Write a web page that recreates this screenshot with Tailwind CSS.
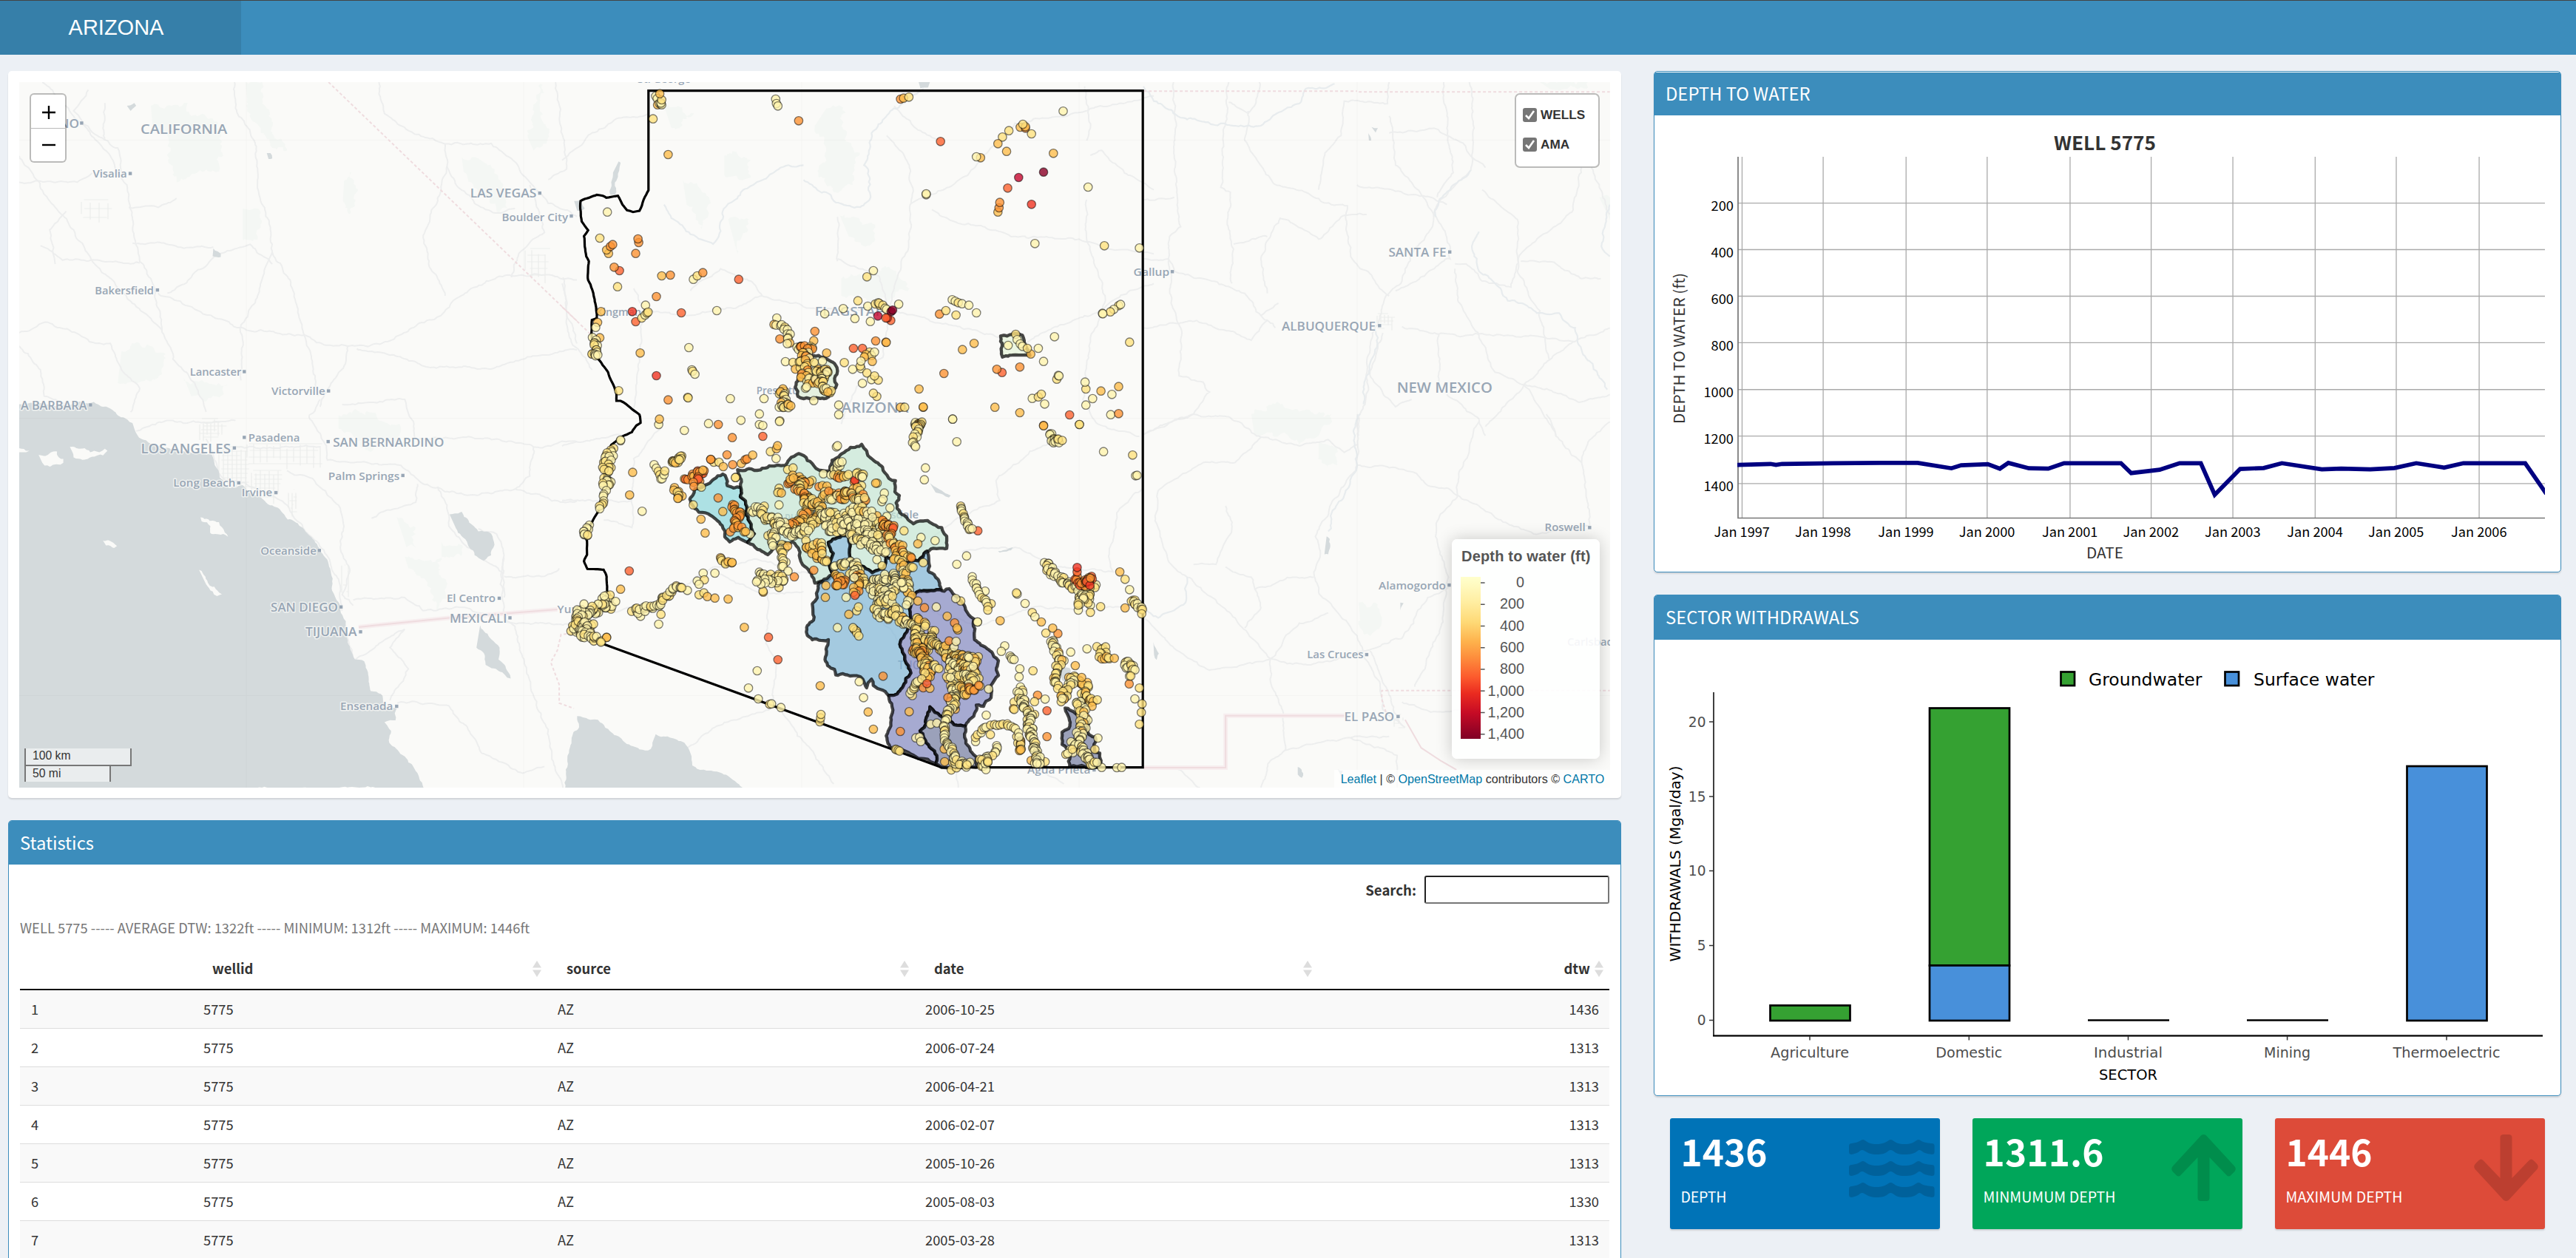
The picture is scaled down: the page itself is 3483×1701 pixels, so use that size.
<!DOCTYPE html>
<html lang="en">
<head>
<meta charset="utf-8">
<title>ARIZONA</title>
<script src="https://cdn.jsdelivr.net/npm/@tailwindcss/browser@4"></script>
</head>
<body class="bg-[#ecf0f5] text-[#333] w-[3483px] h-[1701px] overflow-hidden font-['Noto_Sans_CJK_JP','Open_Sans',sans-serif]">
<header class="flex h-[74px] border-t border-[#444] bg-[#3c8dbc]">
  <div class="w-[326px] bg-[#367fa9] text-white flex items-center justify-center font-['Liberation_Sans',sans-serif] text-[29px] pr-[12px]">ARIZONA</div>
</header>
<main class="flex gap-[44px] pt-[22px] pl-[11px]">
  <div class="w-[2181px] flex flex-col gap-[30px]">
    <section class="h-[983px] rounded-[5px] bg-white pt-[15px] pl-[15px] pr-[15px] shadow-[0_2px_2px_rgba(0,0,0,0.12)]">
      <div class="relative w-[2151px] h-[954px] overflow-hidden font-['Liberation_Sans',sans-serif]">
        <svg id="map" class="block w-[2151px] h-[954px]" viewBox="26 111 2151 954"></svg>
        <div class="absolute left-[14px] top-[15px] w-[50px] h-[94px] rounded-[6px] border-2 border-black/25 bg-white bg-clip-padding flex flex-col text-black">
          <div class="h-[46px] border-b border-[#bbb] flex items-center justify-center pt-[3px] pl-px"><svg width="18" height="18" viewBox="0 0 18 18"><path d="M9 0v18M0 9h18" stroke="black" stroke-width="2.4"/></svg></div>
          <div class="flex-1 flex items-center justify-center pl-px"><svg width="18" height="18" viewBox="0 0 18 18"><path d="M0 9h18" stroke="black" stroke-width="2.4"/></svg></div>
        </div>
        <div class="absolute left-[2022px] top-[15px] w-[115px] h-[101px] rounded-[7px] border-2 border-black/25 bg-white bg-clip-padding pl-[9px] pt-[17px] flex flex-col gap-[20px] text-[17.2px] font-bold leading-[20px]">
          <label class="flex items-center gap-[5px]"><svg width="19" height="19" viewBox="0 0 19 19"><rect width="19" height="19" rx="3" fill="#767676"/><path d="M4 10l4 4L15 4" fill="none" stroke="white" stroke-width="2.6"/></svg>WELLS</label>
          <label class="flex items-center gap-[5px]"><svg width="19" height="19" viewBox="0 0 19 19"><rect width="19" height="19" rx="3" fill="#767676"/><path d="M4 10l4 4L15 4" fill="none" stroke="white" stroke-width="2.6"/></svg>AMA</label>
        </div>
        <div class="absolute left-[1937px] top-[618px] w-[200px] h-[297px] rounded-[7px] bg-white/90 shadow-[0_0_22px_rgba(0,0,0,0.2)]">
          <svg width="200" height="297" viewBox="1963 729 200 297" fill="#555" font-size="19.8" text-anchor="end">
            <defs><linearGradient id="depth" x1="0" y1="0" x2="0" y2="1"><stop offset="0" stop-color="#ffffcc"/><stop offset=".05" stop-color="#fffac0"/><stop offset=".16" stop-color="#ffeda0"/><stop offset=".28" stop-color="#fed976"/><stop offset=".4" stop-color="#feb24c"/><stop offset=".5" stop-color="#fd8d3c"/><stop offset=".62" stop-color="#fc5a2d"/><stop offset=".72" stop-color="#ea2b20"/><stop offset=".84" stop-color="#c60b25"/><stop offset="1" stop-color="#800026"/></linearGradient></defs>
            <text x="1976" y="758.500" font-weight="bold" font-size="20" text-anchor="start" textLength="174.500">Depth to water (ft)</text>
            <rect x="1975" y="780" width="27" height="219" fill="url(#depth)"/>
            <path d="M2002 788h5.600M2002 817.200h5.600M2002 846.500h5.600M2002 875.800h5.600M2002 905h5.600M2002 934.300h5.600M2002 963.600h5.600M2002 992.800h5.600" stroke="#555" stroke-width="1.500"/>
            <text x="2061" y="794">0</text><text x="2061" y="823">200</text><text x="2061" y="852.500">400</text><text x="2061" y="882">600</text><text x="2061" y="911">800</text><text x="2061" y="940.500">1,000</text><text x="2061" y="969.500">1,200</text><text x="2061" y="999">1,400</text>
          </svg>
        </div>
        <div class="absolute right-0 bottom-0 h-[24px] w-[373px] bg-white/70 flex items-center justify-center gap-[4.5px] text-[16.1px] text-[#333] whitespace-pre pl-px"><span class="text-[#0078a8]">Leaflet</span><span>| ©</span><span class="text-[#0078a8]">OpenStreetMap</span><span>contributors ©</span><span class="text-[#0078a8]">CARTO</span></div>
        <div class="absolute left-[7px] bottom-[8px] flex flex-col items-start text-[15.7px] leading-[20px] text-[#333]">
          <div class="w-[145px] h-[24px] border-2 border-t-0 border-[#777] bg-white/50 pl-[9px]">100 km</div>
          <div class="w-[117px] h-[23px] -mt-[2px] border-2 border-b-0 border-[#777] bg-white/50 pl-[9px]">50 mi</div>
        </div>
      </div>
    </section>
    <section class="h-[640px] rounded-[5px] border border-[#3c8dbc] bg-white overflow-hidden">
      <h3 class="h-[59px] bg-[#3c8dbc] text-white text-[23.8px] flex items-center pl-[15px] pb-px"><span>Statistics</span></h3>
      <div class="px-[15px]">
        <div class="flex justify-end items-center gap-[11px] pt-[15px] text-[18.6px] font-bold"><span>Search:</span><div class="w-[250px] h-[38px] rounded-[3px] border-2 border-[#767676] border-t-[#222] border-l-[#222]"></div></div>
        <p class="h-[30px] mt-[18px] text-[18.36px] text-[#777] flex items-center"><span class="whitespace-nowrap">WELL 5775 ----- AVERAGE DTW: 1322ft ----- MINIMUM: 1312ft ----- MAXIMUM: 1446ft</span></p>
        <div class="grid grid-cols-[248px_479px_497px_545px_380px] h-[69px] border-b-2 border-[#111] font-bold text-[18.4px] items-center pt-[13px]" id="thead"></div>
        <div id="rows" class="text-[18.3px]"></div>
      </div>
    </section>
  </div>
  <div class="w-[1227px] flex flex-col">
    <section class="h-[678px] rounded-[5px] border border-[#3c8dbc] bg-white overflow-hidden shadow-[0_2px_2px_rgba(0,0,0,0.12)] pt-px">
      <h3 class="h-[58px] bg-[#3c8dbc] text-white text-[23.8px] flex items-center pl-[15px] pb-[3px]"><span>DEPTH TO WATER</span></h3>
      <svg id="line" class="block" width="1225" height="617" viewBox="2237 157 1225 617"></svg>
    </section>
    <section class="mt-[30px] h-[678px] rounded-[5px] border border-[#3c8dbc] bg-white overflow-hidden shadow-[0_2px_2px_rgba(0,0,0,0.12)]">
      <h3 class="h-[60px] bg-[#3c8dbc] text-white text-[23.8px] flex items-center pl-[15px] pb-[2px]"><span>SECTOR WITHDRAWALS</span></h3>
      <svg id="bars" class="block" width="1225" height="616" viewBox="2237 865 1225 616"></svg>
    </section>
    <div class="mt-[30px] pl-[22px] flex gap-[44px] text-white">
      <div class="w-[365px] h-[150px] rounded-[3px] bg-[#0073b7] shadow-[0_2px_2px_rgba(0,0,0,0.12)]"><svg width="365" height="150" viewBox="0 0 365 150" fill="white">
        <g fill="#000" fill-opacity=".15" id="waves"></g>
        <text x="14.500" y="64.500" font-size="49.500" font-weight="bold" textLength="117">1436</text><text x="14.500" y="113.500" font-size="19.500" textLength="62">DEPTH</text></svg></div>
      <div class="w-[365px] h-[150px] rounded-[3px] bg-[#00a65a] shadow-[0_2px_2px_rgba(0,0,0,0.12)]"><svg width="365" height="150" viewBox="0 0 365 150" fill="white">
        <path d="M312.500 22c2 0 3.500 1 5 3l36 39c3 3 3 6 0 9l-4 4c-2 2-4 2-6 0l-23-24v55c0 3-2 4-4 4h-8c-2 0-4-1-4-4V53l-23 24c-2 2-4 2-6 0l-4-4c-3-3-3-6 0-9l36-39c1.500-2 3-3 5-3z" fill="#000" fill-opacity=".15"/>
        <text x="14.500" y="64.500" font-size="49.500" font-weight="bold" textLength="163">1311.6</text><text x="14.500" y="113.500" font-size="19.500" textLength="179">MINMUMUM DEPTH</text></svg></div>
      <div class="w-[365px] h-[150px] rounded-[3px] bg-[#dd4b39] shadow-[0_2px_2px_rgba(0,0,0,0.12)]"><svg width="365" height="150" viewBox="0 0 365 150" fill="white">
        <path transform="translate(0 134) scale(1 -1)" d="M312.500 22c2 0 3.500 1 5 3l36 39c3 3 3 6 0 9l-4 4c-2 2-4 2-6 0l-23-24v55c0 3-2 4-4 4h-8c-2 0-4-1-4-4V53l-23 24c-2 2-4 2-6 0l-4-4c-3-3-3-6 0-9l36-39c1.500-2 3-3 5-3z" fill="#000" fill-opacity=".15"/>
        <text x="14.500" y="64.500" font-size="49.500" font-weight="bold" textLength="117">1446</text><text x="14.500" y="113.500" font-size="19.500" textLength="158">MAXIMUM DEPTH</text></svg></div>
    </div>
  </div>
</main>
<script>
// ---------- table ----------
const sortIcon = '<svg width="12" height="22" viewBox="0 0 12 22" fill="#ddd"><path d="M6 0l6 9.500H0zM6 22l6-9.500H0z"/></svg>';
document.getElementById('thead').innerHTML = '<span></span>' +
  ['wellid','source','date'].map(h => `<div class="flex items-center justify-between pl-[12px] pr-[22px]"><span>${h}</span>${sortIcon}</div>`).join('') +
  `<div class="flex items-center justify-end gap-[6px] pr-[8px]"><span>dtw</span>${sortIcon}</div>`;
const data = [['2006-10-25',1436],['2006-07-24',1313],['2006-04-21',1313],['2006-02-07',1313],['2005-10-26',1313],['2005-08-03',1330],['2005-03-28',1313]];
document.getElementById('rows').innerHTML = data.map((r,i) =>
  `<div class="grid grid-cols-[248px_479px_497px_545px_380px] h-[52px] items-center border-b border-[#ddd] ${i%2?'bg-white':'bg-[#f9f9f9]'}"><span class="pl-[15px]">${i+1}</span><span>5775</span><span>AZ</span><span>${r[0]}</span><span class="text-right pr-[14px]">${r[1]}</span></div>`).join('');

// ---------- drawing helpers ----------
const F = {L:[0,0,.49745,.35714],M:[0,540,.49745,.35714],A:[760,90,.5102,.33333],B:[760,560,.5102,.33333],C:[920,590,.33333,.33333],R:[1540,90,.43367,.33333],S:[1540,560,.43367,.34439]};
const P = (f,s) => s.trim().split(/\s+/).map(p => {const [x,y]=p.split(',').map(Number);const t=F[f];return [t[0]+x*t[2],t[1]+y*t[3]]});
const D = pts => pts.map((p,i)=>(i?'L':'M')+p[0].toFixed(1)+' '+p[1].toFixed(1)).join('');
const hash = (x,y) => {const v=Math.sin(Math.round(x*7)*12.9898+Math.round(y*7)*78.233)*43758.5453;return v-Math.floor(v)};
function seg(a,b,k){const l=Math.hypot(a[0]-b[0],a[1]-b[1]);if(l<5)return[b];const mx=(a[0]+b[0])/2,my=(a[1]+b[1])/2,d=Math.min(l*.22,3)*k;
  const m=[mx+(hash(mx,my)-.5)*d,my+(hash(my,mx)-.5)*d];return[...seg(a,m,k),...seg(m,b,k)]}
const rough=(pts,k=1)=>{let o=[pts[0]];for(let i=1;i<pts.length;i++)o.push(...seg(pts[i-1],pts[i],k));return o};
const label=(x1,x2,y,size,t,extra='')=>`<text x="${x1}" y="${y}" font-size="${size}" textLength="${x2-x1}" lengthAdjust="spacingAndGlyphs" ${extra}>${t}</text>`;

// ---------- map ----------
let m = '<rect x="26" y="111" width="2151" height="954" fill="#fafaf8"/>';
const parks = [['L','410,400 510,390 520,440 590,460 595,650 520,660 480,690 460,600 440,510 415,480'],['L','668,311 712,311 720,400 740,500 780,570 740,560 700,470 672,380'],['L','660,790 700,790 708,850 700,908 660,908'],['L','330,1330 380,1300 450,1340 430,1430 320,1450'],['L','1255,595 1300,600 1350,660 1380,790 1350,800 1300,730 1260,650'],['L','935,690 955,650 968,730 950,825 932,760'],['L','1435,520 1475,320 1490,520 1450,570'],['L','500,1430 620,1450 600,1500 560,1520 520,1500'],['M','920,60 1020,50 1090,110 1070,170 980,180 920,110'],['M','1100,595 1200,600 1212,740 1190,800 1160,690 1110,640'],['M','1078,445 1125,480 1130,560 1105,560'],['M','1200,540 1250,550 1255,590 1200,595'],['A','700,170 745,165 750,290 790,350 770,480 720,510 680,450 700,330 670,240'],['A','735,600 830,650 820,720 760,690'],['A','430,360 500,380 500,450 430,440'],['A','740,860 870,820 920,900 860,950 740,930'],['A','320,460 390,530 370,660 330,560'],['A','440,620 495,620 465,760'],['A','270,160 350,190 290,250'],['R','350,1410 430,1360 500,1400 600,1410 560,1498 360,1495'],['S','450,0 580,0 560,60 500,120'],['S','560,110 620,130 620,200 590,215 560,170'],['S','685,740 735,740 755,830 720,870 690,810'],['R','1250,63 1400,63 1400,85 1280,90'],['R','1435,530 1468,530 1468,620']];
parks.forEach(p=>m+=`<path d="${D(rough(P(...p),3))}Z" fill="#f4f7f4"/>`);
const roads = [
 ['L','115,311 150,360 215,460 300,590 345,700 360,830 380,990 420,1090 440,1240 470,1360 520,1440 560,1560'],['L','52,590 90,660 140,770 200,870 265,1010 320,1090 440,1250'],['L','637,311 640,410 690,530 700,690 735,860 740,955 700,1120 655,1230 655,1440'],['L','740,955 790,1080 830,1280 865,1500'],['L','430,1110 490,1140 580,1200 670,1250 820,1270 880,1305 945,1310 1000,1312 1060,1290 1130,1235 1180,1210 1240,1130 1350,1050 1480,1040 1568,1060'],['L','945,1310 940,1370 900,1450 870,1540'],['L','970,1320 1130,1370 1170,1392 1340,1395 1420,1360 1568,1325'],['L','1030,311 1045,430 1120,500 1210,545 1335,543 1390,600 1440,690 1490,770 1568,820'],['L','1210,545 1215,630 1240,700 1290,770 1340,805 1400,790'],['L','1440,700 1480,880 1410,960 1390,1050'],['L','1510,311 1525,480 1540,640 1490,680'],['L','285,390 285,530'],['L','52,690 210,690 250,655'],['L','360,920 440,920 500,940 580,935'],['L','350,785 430,785 480,750'],['L','110,930 170,985 280,990 380,995'],['L','455,1110 520,1050 580,975 680,925 740,1000'],['L','52,1260 130,1220 260,1300 300,1300 330,1400 380,1470 355,1560'],['L','52,1310 110,1400 120,1500 200,1540'],['L','240,340 200,420 250,500 320,560 330,680'],['L','1215,630 1190,760 1150,900 1165,1000 1210,1120'],['L','180,800 135,870 150,1000'],['L','1530,1050 1540,1180 1568,1300'],
 ['M','840,60 880,160 890,230 1010,245 1090,250 1150,320 1210,350 1290,362 1400,340 1500,385 1568,385'],['M','640,180 760,185 870,180'],['M','370,120 470,80 560,90 640,80'],['M','560,150 600,290 700,340 780,400 800,450 880,570 920,680 930,800'],['M','780,270 850,300 920,400 935,480 925,560 950,640 930,740 960,780'],['M','960,760 1100,750 1150,800 1270,790 1370,840 1568,855'],['M','1370,600 1360,700 1370,830 1400,860 1425,1000 1460,1170 1490,1250 1500,1350 1530,1470'],['M','940,860 960,990 1100,870 1060,940 1110,1020 1060,1140'],['M','1080,1150 1220,1160 1270,1240 1310,1340 1420,1415 1480,1390'],['M','1190,330 1215,400 1220,480 1270,560 1370,660'],['M','840,60 870,0'],['M','1300,490 1350,510 1370,590 1370,750'],['M','930,20 1100,0 1130,150 1350,150 1450,180 1568,160'],['M','1450,180 1440,290 1400,340'],['M','1520,640 1480,670 1370,670'],['M','1010,450 1050,420 1130,390 1135,320'],
 ['A','0,380 60,300 140,215 230,190'],['A','210,995 330,1010 460,980 530,930 640,975 770,985 880,990 1000,1040 1130,1085 1220,1130 1300,1060 1400,1010 1470,940 1568,880'],['A','190,900 220,990 205,1200 190,1410'],['A','730,790 730,610'],['A','730,780 840,850 870,1000 850,1180 780,1300 740,1450'],['A','980,580 1060,640 1120,650 1190,690 1370,700 1450,740 1568,760'],['A','925,555 1010,500 1080,430 1150,310 1200,230 1400,170 1568,120'],['A','925,555 920,700 880,900 870,1000'],['A','860,280 920,400 925,555'],['A','880,160 950,260 1000,300'],['A','1390,300 1400,250 1385,80'],['A','1390,540 1390,700 1440,950 1400,1100 1380,1350 1420,1450 1530,1500'],['A','1400,360 1430,340 1500,440 1568,500'],['A','340,910 420,820 500,870 530,930'],['A','0,880 20,1100 80,1230'],
 ['B','0,130 60,110 190,70'],['B','110,430 185,460 190,180 260,60'],['B','0,350 185,352'],['B','125,800 250,770 400,620 520,590 640,640 760,730 870,870 930,1020'],['B','400,640 540,730 640,720'],['B','550,700 540,930 570,1000 560,1160 660,1360 720,1500'],['B','290,1400 430,1250 550,1200'],['B','930,570 1040,430 1160,350 1150,270 1240,150 1330,100'],['B','980,800 1100,860 1260,780 1400,800 1540,760'],['B','1060,560 1200,540 1290,610 1460,640 1450,560 1470,400 1540,300'],['B','1040,1430 1050,1515'],['B','1250,1430 1330,1500'],
 ['R','108,63 110,370 130,650 95,690 100,960 130,1060 125,1255 200,1280 220,1320 170,1410 14,1490'],['R','280,63 260,390 255,490 285,510 275,640 295,740 290,880'],['R','14,780 90,780 110,830 200,860 330,920 380,1010 425,1060'],['R','340,180 330,300 420,475 520,510 600,560 650,565 645,620 660,770 690,820 720,840 750,900 780,930'],['R','280,145 340,190 360,160 375,63'],['R','780,63 775,150 640,140 630,280 580,350 560,500'],['R','780,270 840,260 920,250 1010,310 1040,370 1080,410'],['R','680,480 790,500 910,530 960,560'],['R','780,200 800,400 850,470 920,600 945,650 970,730 970,780 890,850 800,910'],['R','950,63 960,250 980,430 930,530'],['R','1030,63 1045,250 1035,420 980,490 930,560 910,660 850,760 820,870 770,930 735,1060 710,1200 705,1370 680,1440 685,1498'],['R','985,800 1020,800 1070,870 1160,895 1190,760 1260,680 1350,590 1380,410'],['R','985,820 1000,960 1060,1100 1110,1240 1200,1290 1300,1498'],['R','1190,790 1300,800 1380,860 1440,860'],['R','820,1055 935,1085 1150,1090 1360,1115 1468,1060'],['R','1360,1115 1280,1190 1200,1290 1080,1460'],['R','1200,1290 1380,1360 1468,1330'],['R','1070,500 1130,570 1180,620 1180,830 1250,990 1280,1190'],['R','410,690 440,615 560,700 630,610 710,600'],['R','14,540 110,530'],['R','14,1060 180,1030 350,1110 400,1030'],['R','760,1080 720,1250 800,1380 850,1350'],['R','935,1085 935,1280'],['R','1410,410 1440,500 1468,600'],['R','960,1330 1060,1430 1080,1498'],['R','380,1010 435,960'],['R','400,920 380,780 410,690'],['R','295,720 400,690'],
 ['S','14,80 170,0 280,10 380,90 500,125 590,100 640,150 680,120'],['S','380,90 300,190 200,190 130,240 60,300 50,400 90,570 150,640 240,730 300,800 410,960 410,1050 450,1180 455,1320 410,1360 380,1466'],['S','680,200 800,210 860,230 900,280 960,290 1040,350 1150,430 1230,470 1405,440'],['S','1270,0 1310,100 1380,190 1400,350 1405,440'],['S','990,330 930,420 930,500 965,640 940,840 860,1070'],['S','965,680 900,720 820,880 700,930 600,970 500,980 410,960 220,1005 110,920 14,800'],['S','680,0 680,200 600,350 550,480 565,560 545,620 560,700 620,780 680,870 700,950 750,1050 760,1160 830,1230'],['S','720,930 770,1070 820,1220'],['S','820,1130 910,1170 1000,1160'],['S','455,1320 660,1270 780,1265'],['S','660,1270 805,1340 805,1466'],['S','1060,30 1000,220 990,330'],['S','1468,30 1400,110 1380,190'],['S','110,1388 190,1466'],['S','590,780 500,820 410,960'],['S','270,600 350,640 380,760 330,840'],['S','360,690 480,640 545,640'],['S','170,590 240,590 290,440 270,360']];
roads.forEach(r=>m+=`<path d="${D(rough(P(...r),1.2))}" fill="none" stroke="#edeeee" stroke-width="2"/>`);
// city street grids
const grid=(x,y,w,h,s)=>{let d='';for(let i=0;i<=w;i+=s)d+=`M${x+i} ${y+hash(i,y)*8}v${h-hash(x,i)*14}`;for(let j=0;j<=h;j+=s)d+=`M${x+hash(j,x)*8} ${y+j}h${w-hash(y,j)*14}`;m+=`<path d="${d}" fill="none" stroke="#ecedec" stroke-width="1.200"/>`};
grid(270,566,34,28,5);grid(296,604,38,60,6);grid(334,600,100,30,9);grid(340,636,40,40,6);grid(710,336,30,40,9);grid(1862,424,22,20,5);grid(110,270,40,28,12);grid(180,912,34,14,8);grid(1885,966,14,18,6);grid(390,662,10,34,5);grid(462,764,12,50,9);
const rivers=[['A','640,460 700,510 720,545 790,570 815,540 815,450 800,400 820,270 870,180 940,110 970,63'],['A','640,400 600,400 540,455 480,500 450,550 425,590 415,690 400,720 340,680 270,560'],['R','14,80 60,150 150,215 300,240 380,240 430,190 500,150 520,90 610,70'],['R','1035,420 970,500 930,570 925,610'],['R','1060,670 1040,720 1060,830 1110,880 1150,950 1210,970 1240,1000 1310,1000 1360,1060 1380,1150 1430,1250 1460,1310'],['S','690,0 670,60 680,200 640,320 600,390 590,460'],['S','150,640 145,740 60,800 14,760'],['R','735,1060 745,1100 700,1300 700,1370'],['R','1468,560 1445,740 1468,770']];
rivers.forEach(r=>m+=`<path d="${D(rough(P(...r),1.500))}" fill="none" stroke="#e8ecee" stroke-width="2.200"/>`);
const water=[['M','52,18 130,20 255,10 300,35 335,68 360,90 378,145 410,168 460,185 540,200 575,208 597,295 620,335 660,325 720,385 765,425 782,455 800,462 830,500 862,548 885,600 900,660 902,710 925,790 940,840 945,920 965,985 990,992 1002,1050 1008,1105 1035,1115 1045,1160 1078,1170 1075,1215 1045,1222 1063,1255 1058,1300 1085,1335 1110,1375 1135,1415 1155,1475 52,1475'],['B','8,1520 14,1400 30,1290 45,1270 40,1225 75,1240 95,1240 130,1290 165,1330 205,1360 235,1358 248,1298 320,1330 340,1375 345,1425 410,1450 440,1468 482,1520'],['M','1222,435 1255,426 1300,500 1335,508 1344,550 1335,590 1315,610 1290,590 1265,530 1240,490'],['M','1305,855 1330,900 1358,940 1355,985 1388,1057 1320,1005 1315,960 1295,940'],['A','150,385 155,390 140,470 140,520 128,520 135,430'],['A','32,545 50,540 60,575 40,585'],['A','945,63 975,63 970,85 950,90'],['L','725,580 735,580 740,600 730,602'],['L','580,940 600,960 600,973 578,970'],['L','345,400 365,390 370,400 355,420'],['S','585,480 595,490 590,550 578,550'],['S','45,895 62,940 55,965 47,945'],['S','495,1385 512,1410 508,1428 495,1415'],['S','620,1395 635,1400 630,1420'],['S','815,740 825,742 815,770'],['B','975,280 1000,305 1030,330 1025,338 990,318'],['B','1155,555 1195,540 1190,552 1160,562'],['R','725,245 745,250 738,268'],['R','715,270 724,300 717,300'],['B','1318,1035 1345,1030 1350,1080 1325,1080']];
water.forEach(r=>m+=`<path d="${D(rough(P(...r),1.200))}Z" fill="#d4dadc"/>`);
const isles=['105,210 130,210 155,197 160,220 172,225 172,240 135,255 115,240','190,180 215,187 230,185 245,200 270,200 285,187 292,195 280,212 265,212 230,228 200,220 197,200','545,447 570,460 595,465 620,520 600,512 575,510 572,480 548,462','280,535 295,533 318,555 310,563 288,553','541,645 548,650 570,705 603,738 590,745 560,700','52,185 65,188 80,195 65,200 52,200'];
isles.forEach(s=>m+=`<path d="${D(rough(P('M',s),1.500))}Z" fill="#fafaf8"/>`);
// tile seams
m+='<path d="M333 111v954M708 111v954M1084 111v954M1459 111v954M1835 111v954M26 189.500h2151M26 565.500h2151M26 940.500h2151" stroke="#000" stroke-opacity=".025" stroke-width="1.200" fill="none"/>';
// borders
m+=`<g fill="none" stroke="#efdcdf" stroke-width="2"><path stroke-dasharray="4 3" d="${D(P('L','893,311 1568,1215'))}${D(P('A','0,975 75,1085'))}${D(P('R','14,100 680,100'))}${D(P('R','685,103 1468,103'))}${D(P('S','770,1170 757,1120 757,1085 1468,1085'))}${D(P('M','1568,885 1525,890 1515,950 1497,995 1520,1080 1520,1150 1560,1170'))}"/><path stroke="#f7eeef" stroke-width="6" d="${D(P('M','975,862 1215,828 1515,795'))}${D(P('S','14,1388 270,1388 270,1184 640,1184'))}"/><path d="${D(P('M','975,862 1215,828 1515,795'))}${D(P('S','14,1388 270,1388 270,1184 640,1184'))}${D(P('S','830,1200 880,1310 940,1360 990,1396'))}"/></g>`;
const labels=[['L',82,215,485,16,'FRESNO',222,466],['L',382,618,506,18.500,'CALIFORNIA'],['L',252,345,671,14.500,'Visalia',354,657],['L',1278,1458,748,16,'LAS VEGAS',1467,731],['L',1364,1544,836,14.500,'Boulder City',1553,818],['L',258,418,1115,14.500,'Bakersfield',428,1098],['L',516,656,1423,14.500,'Lancaster',664,1407],['L',738,884,1496,14.500,'Victorville',893,1480],['L',56,236,1550,16,'A BARBARA',246,1533],
['M',675,815,160,14.500,'Pasadena',664,144],['M',383,627,205,17.500,'LOS ANGELES',637,184],['M',905,1207,180,16.500,'SAN BERNARDINO',892,160],['M',471,640,331,14.500,'Long Beach',649,316],['M',657,740,367,14.500,'Irvine',750,353],['M',892,1086,306,14.500,'Palm Springs',1095,288],['M',708,860,588,14.500,'Oceanside',868,572],['M',1214,1347,768,14.500,'El Centro',1357,753],['M',1222,1378,845,16.500,'MEXICALI',1386,827],['M',736,918,804,16.500,'SAN DIEGO',927,786],['M',830,970,897,16.500,'TIJUANA',980,880],['M',925,1068,1177,14.500,'Ensenada',1078,1162],['M',1515,1600,809,15,'Yuma'],
['A',200,340,65,14.500,'St. George'],['A',90,210,1012,14.500,'Kingman'],['A',670,870,1010,15.500,'FLAGSTAFF'],['A',515,620,1330,15,'Prescott'],['A',740,918,1404,19,'ARIZONA'],
['B',590,700,440,17,'PHOENIX'],['B',800,945,424,15,'Scottsdale'],['B',890,1010,1034,17,'TUCSON'],['B',1233,1400,1459,14.500,'Agua Prieta',1410,1443],
['R',-17,95,848,14.500,'Gallup',104,832],['R',778,958,770,16.500,'SANTA FE',969,752],['R',445,738,1070,16.500,'ALBUQUERQUE',750,1051],['R',804,1102,1322,19.500,'NEW MEXICO'],
['S',1265,1392,459,14.500,'Roswell',1405,445],['S',747,957,687,14.500,'Alamogordo',967,671],['S',524,700,959,14.500,'Las Cruces',710,944],['S',640,796,1205,16.500,'EL PASO',808,1187],['S',1335,1480,909,14.500,'Carlsbad']];
const lab = list => list.map(([f,a,b,y,s,t,dx,dy])=>{const q=F[f];
  let o=label(+(q[0]+a*q[2]).toFixed(1),+(q[0]+b*q[2]).toFixed(1),(q[1]+y*q[3]).toFixed(1),s,t);
  if(dx)o+=`<rect x="${(q[0]+dx*q[2]-2.200).toFixed(1)}" y="${(q[1]+dy*q[3]-2.200).toFixed(1)}" width="4.400" height="4.400" stroke-width="1"/>`;return o}).join('');
m+=`<g font-family="Open Sans, sans-serif" font-weight="600" fill="#98a6b5" stroke="#fafaf8" stroke-opacity=".7" stroke-width="3" paint-order="stroke" stroke-linejoin="round">${lab(labels)}</g>`;
// state outline
const west=rough(P('A','229,502 216,540 205,585 188,590 172,583 160,560 148,524 117,532 108,524 92,520 49,545 52,628 69,664 58,688 64,770 71,790 69,866 80,905 88,960 92,1020 79,1028 79,1100 84,1150 95,1185 122,1240 143,1320 144,1356 155,1356 205,1412 208,1445 197,1456 185,1483 160,1500'),.4)
 .concat(rough(P('B','130,125 110,200 115,300 100,380 82,430 62,480 66,515 66,570 58,597 67,628 110,631 118,660 121,740 100,780 50,800 25,860 35,890 105,930'),.4));
m+=`<path d="${D([...P('A','1539,98 229,98'),...west,...P('B','862,1352 1005,1433 1539,1433')])}Z" fill="none" stroke="#000" stroke-width="3.200"/>`;
// management areas
const amas=[['C','#8bd6db','38,255 60,212 108,195 172,153 190,200 243,208 247,215 243,245 264,262 265,310 280,345 300,395 272,430 235,410 200,428 180,408 178,380 130,325 100,310 75,308 38,255'],
['C','#c4e6d4','232,135 300,138 360,120 425,118 450,85 480,70 550,130 605,140 615,97 690,45 735,32 775,90 820,125 845,170 872,180 870,225 888,240 875,270 890,310 945,355 1003,342 1060,370 1080,405 1080,455 1010,463 965,505 905,512 832,485 825,535 778,553 687,490 683,405 672,403 600,430 620,475 605,520 620,560 580,588 545,595 530,555 495,520 485,470 455,428 415,430 385,445 355,480 272,430 300,395 280,345 265,310 264,262 243,245 247,215 240,160 232,135'],
['C','#7fb5d6','600,430 672,403 683,405 687,490 778,553 825,535 832,485 905,512 965,505 1000,465 1005,545 1045,580 1058,622 958,632 937,655 932,720 935,770 895,825 893,855 910,905 935,960 905,1010 880,1045 845,1052 782,1010 775,985 755,1020 730,975 630,968 625,945 597,930 588,895 600,825 535,825 515,808 512,775 540,745 535,680 555,655 562,595 620,560 605,520 620,475 600,430'],
['C','#8188c0','958,632 1070,628 1090,618 1130,655 1190,740 1193,825 1250,865 1290,910 1282,940 1290,970 1260,1010 1260,1060 1230,1095 1200,1090 1190,1135 1155,1175 1110,1170 1012,1097 995,1150 990,1180 972,1195 1010,1260 1040,1295 1037,1330 850,1260 835,1215 862,1110 845,1052 880,1045 905,1010 935,960 910,905 893,855 895,825 935,770 932,720 937,655 958,632'],
['C','#727a9f','1012,1097 1110,1170 1155,1175 1158,1245 1200,1300 1200,1343 1060,1343 1037,1330 1040,1295 1010,1260 972,1195 990,1180 995,1150 1012,1097'],
['B','#727a9f','1333,1192 1345,1200 1395,1240 1397,1300 1413,1310 1410,1370 1425,1375 1425,1430 1345,1430 1340,1360 1325,1340 1325,1290 1343,1275 1340,1220 1333,1192'],
['A','#dcedd6','640,1165 680,1172 722,1205 730,1235 722,1265 728,1290 715,1330 690,1345 660,1348 625,1338 618,1300 630,1260 635,1200 640,1165'],
['A','#e6f3d9','1162,1093 1220,1090 1225,1120 1240,1172 1167,1178 1162,1093']];
amas.forEach(([f,c,s])=>m+=`<path d="${D(rough(P(f,s),1.300))}Z" fill="${c}" fill-opacity=".7" stroke="#000" stroke-opacity=".72" stroke-width="4.300" stroke-linejoin="round"/>`);
// wells
const col={a:'#fff4ae',b:'#ffe27f',c:'#febe4d',d:'#fd9434',e:'#fc6330',f:'#f03523',g:'#c60730',h:'#8b0026'};
let k=0;const rnd=()=>{k++;return hash(k*3.1,k*1.7)};let W=[];
const ones=(f,s)=>s.trim().split(/\s+/).forEach(t=>{const p=P(f,t.slice(1))[0];W.push([p[0],p[1],t[0]])});
const run=(f,s,n,cs,j=3)=>{const p=P(f,s);let L=[0];for(let i=1;i<p.length;i++)L.push(L[i-1]+Math.hypot(p[i][0]-p[i-1][0],p[i][1]-p[i-1][1]));const T=L[L.length-1];
 for(let i=0;i<n;i++){const d=T*(i+.5)/n;let q=1;while(q<p.length-1&&L[q]<d)q++;const u=(d-L[q-1])/((L[q]-L[q-1])||1);
 W.push([p[q-1][0]+(p[q][0]-p[q-1][0])*u+(rnd()-.5)*2*j,p[q-1][1]+(p[q][1]-p[q-1][1])*u+(rnd()-.5)*2*j,cs[Math.floor(rnd()*cs.length)]])}};
ones('A','a248,120 a252,130 c253,155 a258,150 a262,152 a264,155 a262,148 b264,135 c259,110 b241,212 c281,357 a566,132 a568,150 a572,160 d627,220 d897,132 c905,128 b919,124 a1328,181 c1214,246 d1228,250 c1228,244 b1221,234 b1184,260 b1167,286 b1244,273 c1155,313 c1178,344 c1302,352 c1109,370 a1098,366 e1003,304 g1210,450 h1276,428 e1181,493 a1394,489 a965,520 a965,516 c1155,590 d1158,573 d1160,551 f1244,559 a1253,718 b1437,727 a1530,736');
ones('A','a120,590 b100,696 d203,714 d201,699 c123,758 c118,744 d128,730 d134,722 d195,758 e152,828 d138,814 c264,849 d287,846 a348,863 b358,849 d373,836 e468,863 b147,893 d250,933 a221,968 f186,994 e195,1035 b211,1020 a220,1008 b225,1000 b228,996 e316,999 a410,990 c103,994 c94,1038 a89,1058 c100,1100 c207,1162 a336,1140 f250,1254 a344,1230 b346,1236 a352,1248 b150,1315 d281,1352 b333,1342 b334,1344 a446,1347 a535,1347 a256,1452 c258,1430 a324,1476 a388,1448 d414,1452 a474,1435 a523,1409 a523,1452 a532,1456 b577,1437 a576,1440');
run('A','84,1105 92,1130 84,1165 98,1165',16,'aab',3);
ones('A','a825,828 b808,853 b784,950 a745,982 a696,1003 a810,972 b830,963 a838,958 b842,968 b840,960 b850,968 a856,980 a860,985 h872,994 h876,988 a892,964 a776,1022 a817,1034 g837,1012 e871,1030 f862,1020 e858,1020 a1034,946 a1042,952 b1050,958 a1060,962 a1078,968 a1098,999 d1000,1004 b1017,990 b1044,1008 b1475,970 a1480,965 a1462,985 b1453,995 a1432,1001 a1433,1003 b1504,1118 a1305,1096 a1262,1143 a1276,1196 b1202,1086 a1206,1108 a1214,1125 a1220,1135 c1242,1166 b1233,1143 a1182,1131 c1092,1123 c1061,1148 d1012,1245 e1166,1241 d1152,1228 d1213,1219 b1311,1268 a1315,1253 a1317,1255 b1388,1308 a1386,1280 c1428,1316 c1475,1298 a1457,1330 a1406,1347 a1388,1373 a1246,1346 b1262,1340 b1270,1329 a1279,1369 c1147,1382 c1213,1404 e1345,1413 a1454,1412 d1475,1408 d1276,1456 b1371,1452 a1035,1430 c946,1308 c897,1382 b908,1382 c957,1382 c957,1381 a1293,1490');
ones('A','d670,1074 c667,1112 d831,1113 d858,1118 c859,1119 e772,1143 e796,1143 b815,1158 c805,1168 b820,1172 a828,1158 c801,1178 c822,1196 b748,1201 c701,1162 a770,1228 a792,1225 b790,1215 a792,1195 b808,1243 a820,1270 b838,1272 b828,1255 a796,1285 b834,1338 b825,1325 a592,1197 b612,1200 a667,1355 a733,1373 a733,1412 a569,1020 d577,1105');
run('A','560,1052 583,1052 603,1085 600,1130',13,'aaabc',2);
run('A','620,1140 665,1145 640,1180 645,1230',32,'aabbcd',4);run('A','625,1220 650,1180 640,1270 680,1280',34,'bbccda',5);run('A','670,1220 705,1240 680,1280 712,1330',34,'bbccab',4);ones('A','a690,1195 b668,1200 a645,1305 a648,1300 a702,1238');
run('A','592,1310 580,1320 590,1350 580,1375 608,1378',24,'aabbc',3);
run('A','935,1445 950,1450 940,1470',16,'bbca',3);run('B','948,60 935,80 934,130',11,'aab',3);
ones('B','a727,133 a730,128 c187,236 c179,328 a212,394 b402,195 c394,183 d394,184 b416,195 c427,213 d437,165 d451,95 e532,90 c475,200 d452,205 d485,185 d490,182 c505,166 b552,152 c568,140 c571,128 a567,180 b460,257 c368,426 c379,482 a374,645 a405,645 a358,677 b377,672 a363,690 b363,733 b376,725 c385,740 c405,746 c440,750 a332,715 a208,820 b262,812 a256,852 e178,636 c155,710 c483,865 e547,905 e572,996 a517,1041 a494,1111 a520,1155 b550,1177 a555,1175 a580,1190 c684,1102 b683,1248 b685,1232 b686,1218 a799,1150 c811,1208 c825,1278 a155,108 a155,105');
run('B','132,145 115,195 125,180 115,240 125,260 115,300',36,'aab',5);run('B','118,310 105,360 100,395',8,'aab',2);run('B','70,450 62,465 63,500',10,'aab',3);
run('B','241,197 255,230 262,270 275,225',8,'aab',1);run('B','285,195 315,170 300,200 318,185',14,'bbc',3);run('B','330,275 345,245 372,230 365,262 345,285',18,'cdde',4);run('B','295,295 315,335 300,345',9,'ccb',3);ones('B','b369,296 c373,227');
run('B','415,578 435,605 457,597',8,'ccb',2);run('B','185,805 230,785 270,750 300,705 318,705',34,'aab',4);
run('B','112,740 125,785 60,795 35,840 35,870 70,850',80,'aaab',7);run('B','80,860 45,890 100,920',26,'aab',5);ones('B','a142,760 a58,770 a112,738 c118,905 c118,906 b103,925');
ones('B','a963,218 a960,266 a1035,20 a1046,112 c1276,47 b1371,42 a1435,152 b1512,166 a1520,250 a1524,248 a1072,575 a1046,609 a1121,718 b1137,769 c1161,838 a1101,843 e1102,473 c1478,640 b1492,670 a1504,712 c1492,786 a1368,795 a1400,775 b1400,804 b1427,781 a1206,730 b1204,725 a1227,768 b1246,805 a1253,822 c1270,843 b1282,888 d1314,890 c1300,868 a1348,965 a1330,1000 a1391,952 c1360,1020 d1503,1094 b1530,1111 a1518,1155 b1537,1175 b1535,1210 b1530,1258 a1173,940 a1164,962 a1213,1033 b1248,1041 a1211,1066 d1260,1140 b1252,1166 a1280,1156 b1198,1168 c1196,1195 b1198,1198 e1285,1203 d1285,1308 b1252,1218 b1135,1300 a1124,1221 a1420,1314 a1430,1433 a1470,1434 a1483,1433 b1335,1380 b1412,1360 b1280,1410 c1243,1405');
run('B','1295,80 1300,110 1325,110',13,'aab',3);run('B','1055,370 1068,430 1078,465 1090,465',15,'aaab',1.500);run('B','1086,655 1100,710 1120,760 1130,795',14,'aab',2);
run('B','1280,605 1300,640 1330,675 1360,700',32,'aaab',4);run('B','1360,690 1415,705 1365,735 1405,740 1356,770',40,'aaabb',5);run('B','1362,665 1375,690 1400,665 1395,695',26,'decefd',4);ones('B','e1365,640 f1365,622 d1400,665');
run('B','1508,745 1525,775 1540,805',12,'aab',3);run('B','1187,980 1198,998',4,'a',1);run('B','1300,910 1310,960 1318,1000 1310,1060 1312,1115',34,'aabbc',4);
run('B','1420,935 1440,955 1425,985 1462,990',14,'bbcc',3);run('B','1490,990 1500,1020 1515,1030 1510,1060',15,'aab',4);
run('B','1211,1115 1225,1180 1240,1230 1240,1290 1255,1350 1262,1425',72,'aaab',4);run('B','1210,1310 1215,1370',12,'ccbd',3);run('B','1090,1330 1117,1270 1160,1255 1200,1265 1215,1310',19,'aab',2);run('B','1157,1345 1135,1385 1110,1410 1130,1435',16,'aab',4);
run('B','1350,1060 1385,1100 1385,1140 1415,1175',32,'bbcc',5);run('B','1355,1075 1330,1140 1325,1165',20,'bbac',4);run('B','1365,1160 1385,1230 1370,1320 1345,1370',46,'aabbc',5);run('B','1375,1345 1390,1390 1412,1425',24,'aab',4);ones('B','c1377,1068');
// Phoenix and Tucson basins
ones('C','b435,135 b457,128 a580,152 d153,250 c172,305 b52,278 a283,397 d202,388 b223,167 d705,185 f708,178 b735,200 a400,278 a827,230 a817,265 a822,255 a850,290 b798,190 c792,190 b907,383 c797,322 a837,325 a976,410 c963,436 a1033,423 b985,512 c336,632 b335,628 d462,570 d541,543 b400,613 c590,605 c588,653 a672,653 b715,708 b722,692 c683,722 a637,776');
run('C','465,160 490,185 525,190 470,205 515,240',32,'bccd',4);run('C','430,190 460,170',5,'cdd',2);run('C','515,250 510,300 490,350 440,370',44,'bccd',5);run('C','520,270 555,270 570,320 530,360',44,'bbcc',6);
run('C','575,205 600,240 650,240 700,220 750,265',60,'bbccad',6);run('C','615,155 640,120 655,105',10,'aab',3);run('C','620,160 655,165 680,160',10,'bbcd',3);run('C','715,150 745,165',7,'bba',3);run('C','395,215 405,230',4,'bbc',3);
run('C','275,310 330,290 340,340 385,335 400,375',32,'aabb',4);run('C','355,390 385,400 375,440',13,'aab',4);run('C','410,355 440,400 500,385 520,370',34,'aab',5);run('C','215,265 220,310 250,305 210,365 260,380',24,'ccdd',4);
run('C','560,330 650,330 750,340',60,'aaab',8);run('C','590,370 700,360 800,370',60,'aaab',8);run('C','700,300 750,380 800,430 850,430',60,'aaaab',8);run('C','690,400 760,440 840,460',45,'aaab',6);run('C','720,290 770,320',10,'bca',5);
run('C','815,350 865,370',16,'ddce',4);run('C','840,400 880,450 930,500',28,'bccd',5);run('C','860,480 900,520 920,600 930,660 915,680',28,'bbca',4);run('C','925,535 950,528',3,'b',1);ones('C','a797,500 b818,525 b800,400');
run('C','500,430 545,485 600,515',16,'bcc',4);run('C','540,437 570,440 575,480',8,'bcc',3);run('C','410,440 415,480 425,540',15,'aab',4);ones('C','c435,445');run('C','305,545 340,570 420,570 400,590 310,590',28,'aab',4);
run('C','630,520 700,515 720,530 690,570',26,'aab',4);run('C','635,565 660,590 630,600',16,'ddcc',4);run('C','720,560 745,590 715,610 710,640',20,'ccdb',4);ones('C','e708,645 a705,573 a668,517');
run('C','760,600 800,580 860,570 880,610 900,600',50,'aaab',6);run('C','770,625 850,630 800,670 860,660',50,'aaab',6);run('C','790,700 830,735 870,700 900,750',32,'aabb',5);run('C','880,740 950,760 980,830',28,'aabbc',4);run('C','700,776 715,790 722,812',6,'bba',1.500);ones('C','b700,776');
run('C','950,735 1000,765',7,'bcb',3);run('C','960,790 955,860 945,880',20,'bbc',4);run('C','1020,795 1000,850 980,870',24,'bbc',5);run('C','960,860 990,910 1010,970',56,'bbccd',6);run('C','1000,820 1070,870 1110,890',40,'bbcca',4);
run('C','1080,890 1140,900 1210,910',56,'bbcca',5);run('C','1090,930 1200,950',56,'bbcaa',6);run('C','1090,975 1200,975 1180,1000',34,'aabbc',5);run('C','1020,920 1050,940',6,'aab',3);run('C','1100,1000 1115,1060 1095,1090',28,'aabb',4);run('C','1140,1000 1150,1050',12,'bbc',4);
run('C','935,1045 950,1010 975,990',12,'aab',3);run('C','1160,1020 1190,1030',5,'cd',3);
ones('C','a1165,893 a1170,897 b1080,975 a1095,978 c1075,850 d1090,830 a1110,855 a1118,832 d1190,1030 b1215,1013 d1210,1010 d985,1020 c1012,1022 e1000,1003 a1250,1025 d1085,1060 c1115,1107 a1015,1168 a1040,1163 a955,1223 a970,1220 a975,1238 c928,1117 d892,1197 d822,973 a725,995 c1082,730 d1112,757 c1125,785 c1122,778 a1038,692 d990,695 c963,668 b1137,668 a1117,658 a1205,753 c1072,1320 c1070,1268');
run('C','1120,1085 1080,1120 1070,1190 1080,1240 1110,1290',36,'aab',2.500);run('C','1110,1345 1110,1310 1135,1310 1150,1335 1175,1330',20,'aab',4);run('C','868,1270 890,1278',4,'b',1);run('C','1215,1320 1260,1320',5,'aab',3);
m+='<g fill-opacity=".8" stroke="#000" stroke-opacity=".5" stroke-width="1.300">'+W.map(w=>`<circle cx="${w[0].toFixed(1)}" cy="${w[1].toFixed(1)}" r="5.700" fill="${col[w[2]]}"/>`).join('')+'</g>';
document.getElementById('map').innerHTML=m;

// ---------- depth chart ----------
let s='';
const G={x:x=>2200+x/1.22215,y:y=>80+y/2.1778};
[426,563,700,837,975,1112,1252].forEach((y,i)=>{s+=`<path d="M2350 ${G.y(y)}H3441" stroke="#aaa" stroke-width="1.400"/>`+label(i<4?2313.5:2303.5,2344,G.y(y)+10.5,17.5,(i+1)*200)});
[190,324,461,595,732,866,1001,1137,1271,1408].forEach((x,i)=>{s+=`<path d="M${G.x(x)} 213V701" stroke="#aaa" stroke-width="1.300"/>`+label(G.x(x)-38,G.x(x)+37.5,726.5,18,'Jan '+(1997+i))});
s+='<path d="M2350 213V701.500H3441" fill="none" stroke="#777" stroke-width="1.700"/>';
s+=`<clipPath id="plot"><rect x="2349" y="213" width="1092" height="488"/></clipPath><path clip-path="url(#plot)" d="${D('175,1197 183,1197 237,1194 246,1197 256,1194 300,1193 340,1192 430,1191 480,1191 536,1207 552,1198 596,1195 616,1208 630,1191 664,1207 696,1208 722,1192 816,1192 833,1221 880,1211 913,1192 948,1192 971,1285 1013,1209 1052,1206 1082,1192 1148,1210 1180,1208 1228,1210 1268,1206 1304,1192 1350,1205 1382,1192 1484,1192 1519,1282'.split(' ').map(p=>{const[a,b]=p.split(',');return[G.x(+a),G.y(+b)]}))}" fill="none" stroke="#000080" stroke-width="5.700"/>`;
s+='<g fill="#333">'+label(2777,2915,203.5,26,'WELL 5775','font-weight="bold"')+label(2821,2871,756,20,'DATE')+'<text transform="translate(2277.500 574) rotate(-90)" font-size="20" textLength="204" lengthAdjust="spacingAndGlyphs">DEPTH TO WATER (ft)</text></g>';
document.getElementById('line').innerHTML=s;

// ---------- sector chart ----------
s='';const bar=(x,y,w,h,c)=>`<rect x="${x}" y="${y}" width="${w}" height="${h}" fill="${c}" stroke="#000" stroke-width="2.700"/>`;
s+=bar(2393.5,1359.5,108,20.500,'#35a132')+bar(2609,957.5,108,348,'#35a132')+bar(2609,1305.5,108,74.500,'#4890da')+bar(3254.5,1036,108,344,'#4890da')+'<path d="M2823 1379.500h110M3038 1379.500h110" stroke="#000" stroke-width="2.700"/>';
s+=bar(2786.5,908.5,18.500,18.500,'#35a132')+bar(3008.5,908.5,18.500,18.500,'#4890da')+label(2824,2977.5,926.5,22.8,'Groundwater')+label(3047,3210.5,926.5,22.8,'Surface water');
s+='<path d="M2317 936V1400.500H3438" fill="none" stroke="#000" stroke-width="1.500"/><path d="M2316 1400.500H3438" stroke="#000" stroke-width="2"/>';
[[20,976],[15,1077],[10,1177.5],[5,1278.5],[0,1379.500]].forEach(([v,y])=>s+=`<path d="M2311 ${y}h6" stroke="#333" stroke-width="1.500"/><text x="2306.500" y="${y+6.5}" text-anchor="end" font-size="18.600" fill="#4d4d4d">${v}</text>`);
[['Agriculture',2447,106],['Domestic',2662.3,90],['Industrial',2877.5,93],['Mining',3092.6,63],['Thermoelectric',3308,145]].forEach(([t,x,w])=>s+=`<path d="M${x} 1401v5.500" stroke="#333" stroke-width="1.500"/>`+label(x-w/2,x+w/2,1430,18.6,t,'fill="#4d4d4d"'));
s+=label(2838,2917,1460,18.6,'SECTOR')+'<text transform="translate(2272 1300.500) rotate(-90)" font-size="18.600" textLength="265" lengthAdjust="spacingAndGlyphs">WITHDRAWALS (Mgal/day)</text>';
document.getElementById('bars').innerHTML=`<g font-family="DejaVu Sans, sans-serif">${s}</g>`;

// ---------- wave icon ----------
document.getElementById('waves').innerHTML=[29,58,87].map(y=>`<path transform="translate(242 ${y}) scale(.94 1)" d="M0 9c0-3 1-4 4-4 6-1 10-2 13-4q3-2 6 0c4 3 9 5 17 5s13-2 17-5q3-2 6 0c4 3 9 5 17 5s13-2 17-5q3-2 6 0c4 3 8 3 16 4 3 0 4 1 4 4v7c0 3-1 4-4 4-7-1-11-2-15-5q-3-2-5 0c-5 4-10 5-19 5s-13-2-17-5q-3-2-6 0c-5 4-9 5-17 5s-13-2-18-5q-3-2-6 0c-3 3-8 4-12 5-3 0-4-1-4-4z"/>`).join('');
</script>
</body>
</html>
